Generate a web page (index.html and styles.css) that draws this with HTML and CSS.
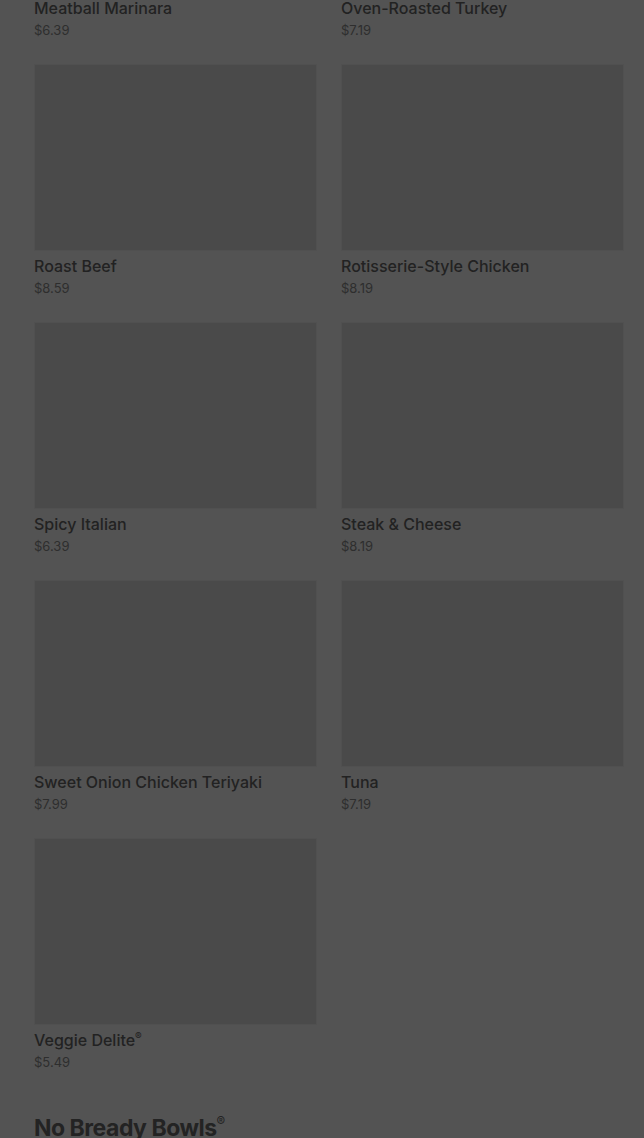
FILE: index.html
```html
<!DOCTYPE html>
<html lang="en">
<head>
  <meta charset="UTF-8" />
  <meta name="viewport" content="width=device-width, initial-scale=1.0"/>
  <title>Menu - Subs</title>
  <link rel="stylesheet" href="styles.css">
</head>
<body>
  <div class="page">
    <!-- Subs -->
    <div class="menu-grid">
      <div class="item">
        <div class="item-img"></div>
        <h3>Meatball Marinara</h3>
        <p class="price">$6.39</p>
      </div>
      <div class="item">
        <div class="item-img"></div>
        <h3>Oven-Roasted Turkey</h3>
        <p class="price">$7.19</p>
      </div>
      <div class="item">
        <div class="item-img"></div>
        <h3>Roast Beef</h3>
        <p class="price">$8.59</p>
      </div>
      <div class="item">
        <div class="item-img"></div>
        <h3>Rotisserie-Style Chicken</h3>
        <p class="price">$8.19</p>
      </div>
      <div class="item">
        <div class="item-img"></div>
        <h3>Spicy Italian</h3>
        <p class="price">$6.39</p>
      </div>
      <div class="item">
        <div class="item-img"></div>
        <h3>Steak &amp; Cheese</h3>
        <p class="price">$8.19</p>
      </div>
      <div class="item">
        <div class="item-img"></div>
        <h3>Sweet Onion Chicken Teriyaki</h3>
        <p class="price">$7.99</p>
      </div>
      <div class="item">
        <div class="item-img"></div>
        <h3>Tuna</h3>
        <p class="price">$7.19</p>
      </div>
      <div class="item">
        <div class="item-img"></div>
        <h3>Veggie Delite<sup>®</sup></h3>
        <p class="price">$5.49</p>
      </div>
    </div>

    <!-- Bowls -->
    <h2 class="section-title">No Bready Bowls<sup>®</sup></h2>
  </div>
</body>
</html>
```

FILE: styles.css
```css
* {
  box-sizing: border-box;
  margin: 0;
  padding: 0;
}

body {
  background-color: #535353;
  font-family: 'Inter', 'Roboto', sans-serif;
  overflow: hidden;
}

.page {
  padding: 0 20px 0 34px;
  margin-top: -194px;
}

.menu-grid {
  display: grid;
  grid-template-columns: 1fr 1fr;
  column-gap: 24px;
  row-gap: 24px;
}

.item-img {
  height: 187px;
  background-color: #4a4a4a;
  border: 1px solid #505050;
}

.item h3 {
  margin-top: 3px;
  font-size: 16px;
  line-height: 24px;
  font-weight: 500;
  color: #222;
}

.item h3 sup {
  font-size: 10px;
  vertical-align: 6px;
  line-height: 0;
}

.price {
  font-size: 13px;
  line-height: 20px;
  color: #2e2e2e;
}

.section-title {
  margin-top: 40px;
  font-size: 23px;
  line-height: 32px;
  font-weight: 700;
  color: #232323;
  letter-spacing: -0.5px;
}

.section-title sup {
  font-size: 13px;
  vertical-align: 10px;
  line-height: 0;
  font-weight: 500;
}
```
